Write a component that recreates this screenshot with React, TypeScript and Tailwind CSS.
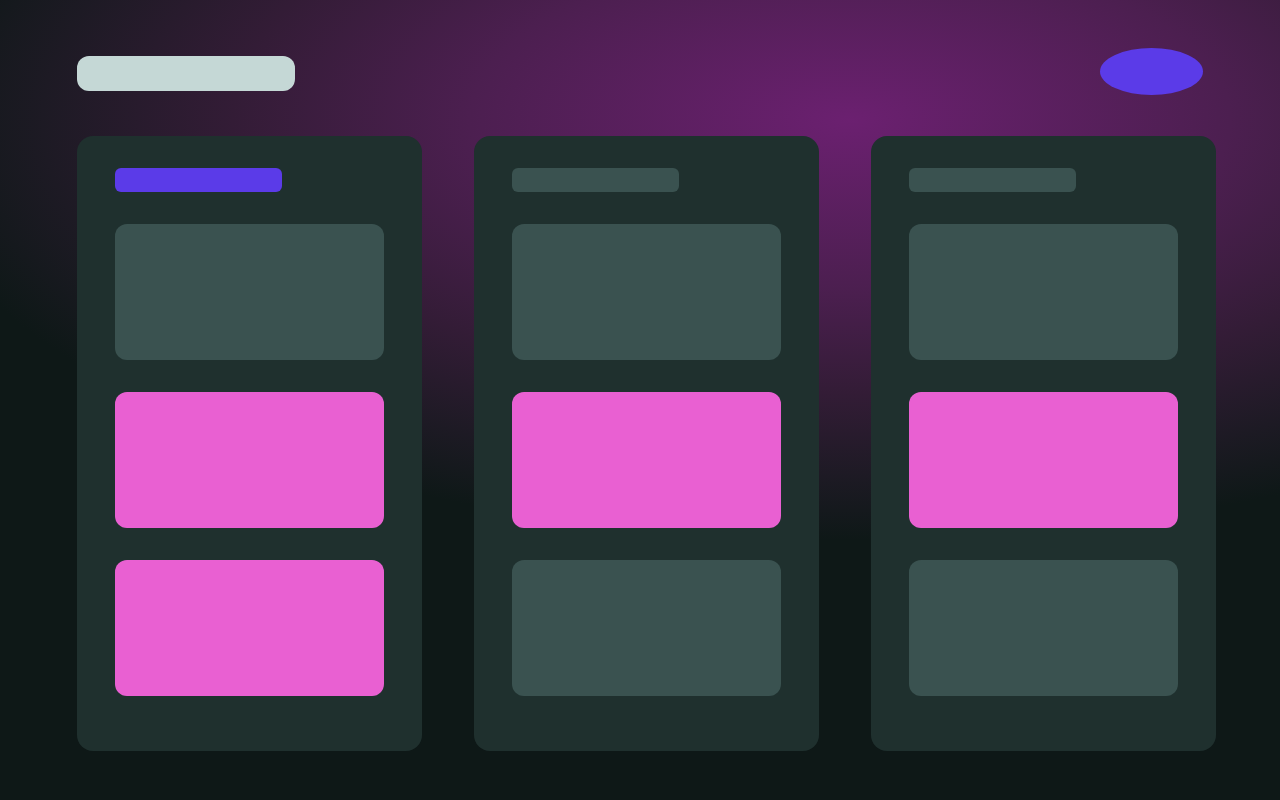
const columns = [
  { active: true, cards: ["gray", "pink", "pink"] },
  { active: false, cards: ["gray", "pink", "gray"] },
  { active: false, cards: ["gray", "pink", "gray"] },
];

export default function App() {
  return (
    <div className="w-[1280px] h-[800px] overflow-hidden bg-[#0e1817] bg-[radial-gradient(950px_420px_at_850px_120px,#6b2070_0%,#4c1f50_40%,#331c36_65%,#1d1a24_85%,#0e1817_100%)] pt-[48px] pl-[77px]">
      {/* Header */}
      <header className="flex w-[1126px] items-start justify-between">
        <div className="mt-[8px] h-[35px] w-[218px] rounded-xl bg-[#c5d8d6]" />
        <div className="h-[47px] w-[103px] rounded-[50%] bg-[#5b3be8]" />
      </header>

      {/* Board */}
      <div className="mt-[41px] flex gap-[52px]">
        {columns.map((col, i) => (
          <div
            key={i}
            className="h-[615px] w-[345px] rounded-2xl bg-[#1f302e] px-[38px] pt-[32px]"
          >
            <div
              className={`h-[24px] w-[167px] rounded-md ${
                col.active ? "bg-[#5b3be8]" : "bg-[#3a5250]"
              }`}
            />
            <div className="mt-[32px] flex flex-col gap-[32px]">
              {col.cards.map((c, j) => (
                <div
                  key={j}
                  className={`h-[136px] w-full rounded-xl ${
                    c === "pink" ? "bg-[#e960d2]" : "bg-[#3a5250]"
                  }`}
                />
              ))}
            </div>
          </div>
        ))}
      </div>
    </div>
  );
}
